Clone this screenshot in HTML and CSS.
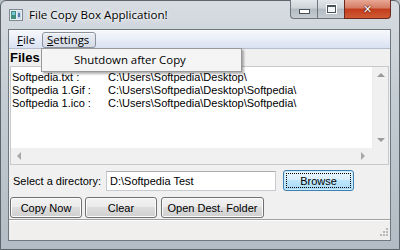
FILE: index.html
```html
<!DOCTYPE html>
<html lang="en">
<head>
  <meta charset="UTF-8">
  <title>File Copy Box Application!</title>
  <link rel="stylesheet" href="styles.css">
</head>
<body>

<div class="window">
  <div class="titlebar">
    <svg class="app-icon" width="14" height="12" viewBox="0 0 14 12">
      <rect x="0.5" y="0.5" width="13" height="11" fill="#e8eef2" stroke="#7d8a96"/>
      <rect x="2" y="2" width="5" height="8" fill="#3f8f7a"/>
      <rect x="3" y="3" width="3" height="3" fill="#7cc4d8"/>
      <rect x="8" y="2" width="4" height="8" fill="#c9d8e4"/>
      <rect x="9" y="4" width="2" height="4" fill="#4f7fb0"/>
    </svg>
    <span class="title">File Copy Box Application!</span>
    <div class="caption-btns">
      <div class="cap-btn min"><span class="min-glyph"></span></div>
      <div class="cap-btn max"><span class="max-glyph"></span></div>
      <div class="cap-btn close">&#x2715;</div>
    </div>
  </div>

  <div class="client">
    <div class="menubar">
      <span class="menu-item"><u>F</u>ile</span>
      <span class="menu-item open"><u>S</u>ettings</span>
    </div>

    <!-- dropdown of Settings -->
    <div class="dropdown">
      <div class="dropdown-item">Shutdown after Copy</div>
    </div>

    <div class="files-label">Files</div>

    <div class="listbox">
      <div class="list-body">
        <div class="list-lines">
          <div class="line"><span class="col1">Softpedia.txt :</span><span>C:\Users\Softpedia\Desktop\</span></div>
          <div class="line"><span class="col1">Softpedia 1.Gif :</span><span>C:\Users\Softpedia\Desktop\Softpedia\</span></div>
          <div class="line"><span class="col1">Softpedia 1.ico :</span><span>C:\Users\Softpedia\Desktop\Softpedia\</span></div>
        </div>
        <div class="vscroll">
          <span class="arrow up"></span>
          <span class="arrow down"></span>
        </div>
      </div>
      <div class="list-foot">
        <div class="hscroll">
          <span class="arrow left"></span>
          <span class="arrow right"></span>
        </div>
        <div class="corner"></div>
      </div>
    </div>

    <div class="dir-row">
      <label>Select a directory:</label>
      <div class="textbox">D:\Softpedia Test</div>
      <button class="btn browse"><span class="focus">Browse</span></button>
    </div>

    <div class="btn-row">
      <button class="btn copy">Copy Now</button>
      <button class="btn clear">Clear</button>
      <button class="btn open-dest">Open Dest. Folder</button>
    </div>

    <div class="statusbar">
      <svg class="grip" width="10" height="10" viewBox="0 0 10 10">
        <rect x="8" y="0" width="2" height="2" fill="#b8b8b8"/>
        <rect x="5" y="3" width="2" height="2" fill="#b8b8b8"/>
        <rect x="8" y="3" width="2" height="2" fill="#b8b8b8"/>
        <rect x="2" y="6" width="2" height="2" fill="#b8b8b8"/>
        <rect x="5" y="6" width="2" height="2" fill="#b8b8b8"/>
        <rect x="8" y="6" width="2" height="2" fill="#b8b8b8"/>
      </svg>
    </div>
  </div>
</div>

</body>
</html>
```

FILE: styles.css
```css
html, body {
  margin: 0;
  padding: 0;
}

body {
  font-family: 'Liberation Sans', Arial, sans-serif;
  font-size: 11px;
  color: #000;
  background: #b7c0c8;
  white-space: nowrap;
}

.window {
  width: 400px;
  height: 250px;
  box-sizing: border-box;
  padding: 0 8px 8px 7px;
  display: flex;
  flex-direction: column;
  background: linear-gradient(to bottom, #d6dce1 0%, #c4ccd3 40%, #b3bcc4 100%);
  border: 1px solid #5d656c;
  border-radius: 6px 6px 0 0;
}

/* title bar */
.titlebar {
  height: 28px;
  display: flex;
  align-items: flex-start;
}

.app-icon {
  margin: 8px 0 0 1px;
}

.title {
  margin: 6px 0 0 6px;
  font-family: 'Open Sans', sans-serif;
  font-size: 11.6px;
  color: #000;
  text-shadow: 0 0 6px #fff, 0 0 3px #fff;
}

.caption-btns {
  margin-left: auto;
  display: flex;
  margin-top: -1px;
}

.cap-btn {
  height: 19px;
  box-sizing: border-box;
  border: 1px solid #6c747c;
  border-top: none;
  display: flex;
  align-items: center;
  justify-content: center;
  background: linear-gradient(to bottom, #e3e7ea 0%, #cdd3d8 45%, #b3bbc2 50%, #c5ccd2 100%);
}

.cap-btn.min {
  width: 27px;
  border-radius: 0 0 0 4px;
  border-right: none;
}

.cap-btn.max {
  width: 27px;
  border-right: none;
}

.cap-btn.close {
  width: 47px;
  border-radius: 0 0 4px 0;
  border-color: #6b2a1f;
  color: #fff;
  font-family: 'DejaVu Sans', sans-serif;
  font-size: 11px;
  font-weight: bold;
  text-shadow: 0 0 1px #3a0a04, 0 0 2px #5a1a10;
  background: linear-gradient(to bottom, #e8a896 0%, #d47a62 45%, #c23c1c 50%, #d05a34 100%);
}

.min-glyph {
  width: 9px;
  height: 3px;
  margin-top: 5px;
  background: #fff;
  border: 1px solid #4a525a;
}

.max-glyph {
  width: 7px;
  height: 5px;
  border: 1px solid #4a525a;
  border-top-width: 2px;
  background: #f4f6f8;
  box-shadow: 0 0 0 1px #fff;
}

/* client area */
.client {
  flex: 1;
  display: flex;
  flex-direction: column;
  background: #f0f0f0;
  border: 1px solid #6f777f;
  position: relative;
}

.menubar {
  height: 18px;
  border-bottom: 1px solid #b6bccc;
  background: linear-gradient(to bottom, #f7f9fc 0%, #e9eef8 50%, #d9e1f1 100%);
  display: flex;
  align-items: center;
  padding-left: 1px;
  font-family: 'Open Sans', sans-serif;
  font-size: 11.4px;
}

.menu-item {
  padding: 0 4px 0 6px;
  height: 16px;
  line-height: 14px;
  margin-top: 2px;
  box-sizing: border-box;
  border: 1px solid transparent;
  border-radius: 3px;
}

.menu-item.open {
  margin-left: 2px;
  padding: 0 6px 0 4px;
  border-color: #8c929c;
  background: linear-gradient(to bottom, #e9edf3 0%, #d5dbe6 100%);
  box-shadow: inset 0 1px 0 #f8f9fb;
}

.dropdown {
  position: absolute;
  left: 32px;
  top: 18px;
  width: 201px;
  height: 24px;
  box-sizing: border-box;
  border: 1px solid #979797;
  background: #f5f5f5;
  box-shadow: 2px 2px 2px rgba(0, 0, 0, 0.3);
  z-index: 2;
  font-family: 'Open Sans', sans-serif;
  font-size: 11.4px;
}

.dropdown-item {
  padding: 3px 0 0 32px;
  line-height: 16px;
}

.files-label {
  height: 17px;
  padding-left: 1px;
  font-size: 13px;
  font-weight: bold;
  line-height: 18px;
}

/* list box */
.listbox {
  margin: 0 1px;
  height: 99px;
  box-sizing: border-box;
  border: 1px solid #c6c9ce;
  background: #fff;
  display: flex;
  flex-direction: column;
}

.list-body {
  flex: 1;
  display: flex;
}

.list-lines {
  flex: 1;
  padding: 4px 0 0 1px;
  line-height: 13px;
  overflow: hidden;
}

.line {
  display: flex;
}

.col1 {
  width: 96px;
}

.vscroll {
  width: 16px;
  background: #f0f0f0;
  border-left: 1px solid #ececec;
  display: flex;
  flex-direction: column;
  justify-content: space-between;
  align-items: center;
  padding: 6px 0;
  box-sizing: border-box;
}

.list-foot {
  height: 16px;
  display: flex;
}

.hscroll {
  flex: 1;
  background: #f0f0f0;
  display: flex;
  justify-content: space-between;
  align-items: center;
  padding: 0 6px;
}

.corner {
  width: 17px;
  background: #f0f0f0;
}

.arrow {
  width: 0;
  height: 0;
  border: 4px solid transparent;
}

.arrow.up { border-bottom-color: #9a9a9a; border-top-width: 0; }
.arrow.down { border-top-color: #9a9a9a; border-bottom-width: 0; }
.arrow.left { border-right-color: #a8a8a8; border-left-width: 0; }
.arrow.right { border-left-color: #a8a8a8; border-right-width: 0; }

/* directory row */
.dir-row {
  display: flex;
  align-items: center;
  margin-top: 5px;
  height: 21px;
}

.dir-row label {
  width: 93px;
  padding-left: 4px;
}

.textbox {
  width: 170px;
  height: 20px;
  box-sizing: border-box;
  border: 1px solid #c7cbd0;
  border-top-color: #abadb3;
  background: #fff;
  padding-left: 3px;
  line-height: 18px;
}

button {
  font-family: inherit;
  font-size: 11px;
  color: #000;
  padding: 0;
  cursor: pointer;
  white-space: nowrap;
}

.btn {
  height: 21px;
  box-sizing: border-box;
  border: 1px solid #707070;
  border-radius: 3px;
  background: linear-gradient(to bottom, #f2f2f2 0%, #ebebeb 45%, #dddddd 50%, #cfcfcf 100%);
  box-shadow: inset 0 0 0 1px #fcfcfc;
}

.btn.browse {
  width: 71px;
  margin-left: 7px;
  border-color: #3c7fb1;
  background: linear-gradient(to bottom, #eaf6fd 0%, #d9f0fc 45%, #bee6fd 50%, #a7d9f5 100%);
  box-shadow: inset 0 0 0 1px #cbeafc;
  padding: 2px;
}

.btn.browse .focus {
  display: block;
  height: 100%;
  box-sizing: border-box;
  border: 1px dotted #000;
  line-height: 14px;
}

.btn-row {
  display: flex;
  margin: 6px 0 0 1px;
}

.btn.copy { width: 72px; }
.btn.clear { width: 72px; margin-left: 3px; }
.btn.open-dest { width: 103px; margin-left: 4px; }

.statusbar {
  flex: 1;
  margin-top: 1px;
  border-top: 1px solid #a0a0a0;
  box-shadow: inset 0 1px 0 #fdfdfd;
  background: #f1eeee;
  display: flex;
  justify-content: flex-end;
  align-items: flex-end;
  padding: 0 2px 2px 0;
}
```
